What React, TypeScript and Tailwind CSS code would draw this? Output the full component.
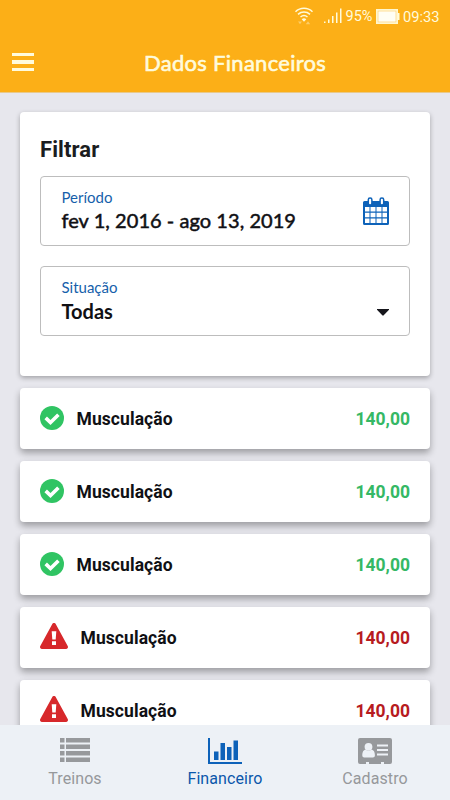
import React from "react";

function StatusBar() {
  return (
    <div className="flex h-[32px] items-center justify-end pr-[10px] text-[#fffbdc]">
      <svg className="mr-[10px]" width="20" height="20" viewBox="0 0 20 20" fill="none" stroke="currentColor" strokeWidth="1.500">
        <path d="M1.500 5.700a12.500 12.500 0 0 1 17 0M4 8.400a9 9 0 0 1 12 0M6.500 11a5.400 5.400 0 0 1 7 0" />
        <path d="M7.700 13.200a3.400 3.400 0 0 1 4.600 0L10 15.700z" fill="currentColor" stroke="none" />
        <path d="M4 15.500h4l-2 2.800zM14 15.300l2.200 3h-4.400z" fill="currentColor" fillOpacity="0.4" stroke="none" />
      </svg>
      <svg className="mr-[4px]" width="18" height="17" viewBox="0 0 18 17" fill="currentColor">
        <path d="M0 13.500h1.500v1.500H0zM4 11.500h1.500V15H4zM8 8h1.500v7H8zM12 4.500h1.500V15H12zM16 .5h1.500V15H16z" />
      </svg>
      <span className="mr-[3px] w-[27.500px] whitespace-nowrap pt-[2px] font-[Roboto,sans-serif] text-[14.500px] leading-none">95%</span>
      <svg className="mr-[3px]" width="24" height="15" viewBox="0 0 24 15">
        <rect x="0.750" y="0.750" width="20.500" height="13.500" fill="#fffef5" stroke="#fff7ce" strokeWidth="1.500" />
        <rect x="2" y="2" width="18" height="11" fill="none" stroke="#fdc95c" strokeWidth="0.600" />
        <rect x="21.500" y="4" width="2" height="7" fill="currentColor" />
      </svg>
      <span className="w-[37px] whitespace-nowrap pt-[2px] font-[Roboto,sans-serif] text-[14.700px] leading-none">09:33</span>
    </div>
  );
}

function Header() {
  return (
    <header className="h-[93px] shrink-0 border-b border-[#e9c98a] bg-[#fcaf17]">
      <StatusBar />
      <div className="grid h-[60px] grid-cols-[60px_1fr_40px] items-center">
        <div className="ml-[12px] flex w-[22px] flex-col gap-1">
          <i className="h-[3.500px] bg-[#fffbdc]" />
          <i className="h-[3.500px] bg-[#fffbdc]" />
          <i className="h-[3.500px] bg-[#fffbdc]" />
        </div>
        <h1 className="pt-px pl-[84px] font-[Lato,sans-serif] text-[22px] tracking-[0.29px] whitespace-nowrap text-[#fffbdc] [-webkit-text-stroke:0.6px_#fffbdc]">
          Dados Financeiros
        </h1>
      </div>
    </header>
  );
}

function CalendarIcon() {
  return (
    <svg width="26" height="28" viewBox="0 0 26 28">
      <path d="M1.500 4h23A1.500 1.500 0 0 1 26 5.500v21a1.500 1.500 0 0 1-1.500 1.500h-23A1.500 1.500 0 0 1 0 26.500v-21A1.500 1.500 0 0 1 1.500 4z" fill="#0d62b9" />
      <path d="M2 10h4.500v4.500H2zM7.500 10h5v4.500h-5zM13.500 10h5v4.500h-5zM19.500 10H24v4.500h-4.500zM2 15.700h4.500v4.600H2zM7.500 15.700h5v4.600h-5zM13.500 15.700h5v4.600h-5zM19.500 15.700H24v4.600h-4.500zM2 21.500h4.500V26H2zM7.500 21.500h5V26h-5zM13.500 21.500h5V26h-5zM19.500 21.500H24V26h-4.500z" fill="#fff" />
      <rect x="5.300" y="1" width="3.600" height="7" rx="1.700" fill="#fff" stroke="#0d62b9" strokeWidth="1.500" />
      <rect x="17.100" y="1" width="3.600" height="7" rx="1.700" fill="#fff" stroke="#0d62b9" strokeWidth="1.500" />
    </svg>
  );
}

function Field({ label, value, bold, children }: { label: string; value: string; bold?: boolean; children: React.ReactNode }) {
  return (
    <div className="flex h-[70px] justify-between rounded-[4px] border border-[#bdbdbd] pl-[20.500px] font-[Lato,sans-serif]">
      <div className="pt-[10px]">
        <div className="text-[15px] leading-[20px] text-[#165fab]">{label}</div>
        <div className={"text-[20px] text-[#101014] " + (bold ? "leading-[28px] font-bold" : "leading-[26px] tracking-[0.05px] [-webkit-text-stroke:0.5px_#101014]")}>{value}</div>
      </div>
      {children}
    </div>
  );
}

function CheckIcon() {
  return (
    <svg width="24" height="24" viewBox="0 0 24 24">
      <circle cx="12" cy="12" r="12" fill="#30c463" />
      <path d="M5.700 11.900l4.800 4.700 7.900-7.800" fill="none" stroke="#fff" strokeWidth="3.600" />
    </svg>
  );
}

function WarningIcon() {
  return (
    <svg className="-translate-y-px" width="28" height="26" viewBox="0 0 28 26">
      <path d="M12.300.9a2 2 0 0 1 3.400 0l12 22.100a2 2 0 0 1-1.700 3H2a2 2 0 0 1-1.700-3z" fill="#d7282b" />
      <path d="M11.700 8.300h4.600l-.6 8.300h-3.400zM12 18.200h4v3.700h-4z" fill="#fff" />
    </svg>
  );
}

function Row({ paid }: { paid: boolean }) {
  return (
    <div className="flex h-[61px] shrink-0 items-center rounded-[4px] bg-white px-5 pb-px font-[Roboto,sans-serif] text-[17.500px] font-bold shadow-[0_4px_7px_rgba(0,0,0,0.32)]">
      {paid ? <CheckIcon /> : <WarningIcon />}
      <span className="ml-[12.500px] translate-y-px tracking-[0.08px] text-[#101014]">Musculação</span>
      <span className={"ml-auto translate-y-px " + (paid ? "text-[#35b865]" : "text-[#b71c1f]")}>140,00</span>
    </div>
  );
}

function ListIcon() {
  return (
    <svg width="30" height="24" viewBox="0 0 30 24" fill="#97999c">
      <path d="M0 0h4.500v4.500H0zM6 0h24v4.500H6zM0 6.500h4.500V11H0zM6 6.500h24V11H6zM0 13h4.500v4.500H0zM6 13h24v4.500H6zM0 19.500h4.500V24H0zM6 19.500h24V24H6z" />
    </svg>
  );
}

function ChartIcon() {
  return (
    <svg width="34" height="26" viewBox="0 0 34 26" fill="#0d62b9">
      <path d="M0 0h2v24h32v2H0zM6 13.500h4.500V22H6zM12.500 5H17v17h-4.500zM19 9h4.500v13H19zM25.500 2.500H30V22h-4.500z" />
    </svg>
  );
}

function CardIcon() {
  return (
    <svg width="34" height="26" viewBox="0 0 34 26">
      <path d="M2 0h30a2 2 0 0 1 2 2v22a2 2 0 0 1-2 2h-6v-2h-3v2H11v-2H8v2H2a2 2 0 0 1-2-2V2a2 2 0 0 1 2-2z" fill="#97999c" />
      <circle cx="10.500" cy="8.800" r="3.900" fill="#edf1f6" />
      <path d="M4.300 17.500c0-3.500 1-5.800 3.500-5.800 1.500 1.500 4 1.500 5.500 0 2.500 0 3.600 2.300 3.600 5.800 0 1.300-.8 2-2 2H6.300c-1.200 0-2-.7-2-2zM19 6.500h11v2H19zM19 11h11v2H19zM19 15.500h11v2H19z" fill="#edf1f6" />
    </svg>
  );
}

function Tab({ label, active, children }: { label: string; active?: boolean; children: React.ReactNode }) {
  return (
    <div className="flex flex-col items-center pt-[13px]">
      <div className="h-[26px]">{children}</div>
      <span className={"mt-[4px] font-[Roboto,sans-serif] text-[16px] leading-[22px] tracking-[0.08px] " + (active ? "text-[#0b57ab]" : "text-[#96989b]")}>{label}</span>
    </div>
  );
}

export default function App() {
  return (
    <div className="flex h-[800px] w-[450px] flex-col overflow-hidden bg-[#e7e7ed]">
      <Header />
      <main className="flex min-h-0 flex-1 flex-col gap-[12px] overflow-hidden px-5 pt-[19px]">
        <section className="flex h-[264px] shrink-0 flex-col rounded-[4px] bg-white px-5 pt-[22px] shadow-[0_2px_5px_rgba(0,0,0,0.3)]">
          <h2 className="mb-[12px] pt-px font-[Roboto,sans-serif] text-[22px] leading-[29px] font-bold tracking-[0.1px] text-[#1b1c20]">Filtrar</h2>
          <Field label="Período" value="fev 1, 2016 - ago 13, 2019">
            <div className="mr-[20px] pt-[19.500px]"><CalendarIcon /></div>
          </Field>
          <div className="h-[19.500px]" />
          <Field label="Situação" value="Todas" bold>
            <div className="mr-[20px] pt-[42px]">
              <svg width="12" height="7" viewBox="0 0 12 7"><path d="M0 0h12v.8L6.700 6.300a1 1 0 0 1-1.400 0L0 .8z" fill="#16161c" /></svg>
            </div>
          </Field>
        </section>
        <Row paid />
        <Row paid />
        <Row paid />
        <Row paid={false} />
        <Row paid={false} />
      </main>
      <nav className="grid h-[75px] shrink-0 grid-cols-3 bg-[#edf1f6]">
        <Tab label="Treinos"><ListIcon /></Tab>
        <Tab label="Financeiro" active><ChartIcon /></Tab>
        <Tab label="Cadastro"><CardIcon /></Tab>
      </nav>
    </div>
  );
}
